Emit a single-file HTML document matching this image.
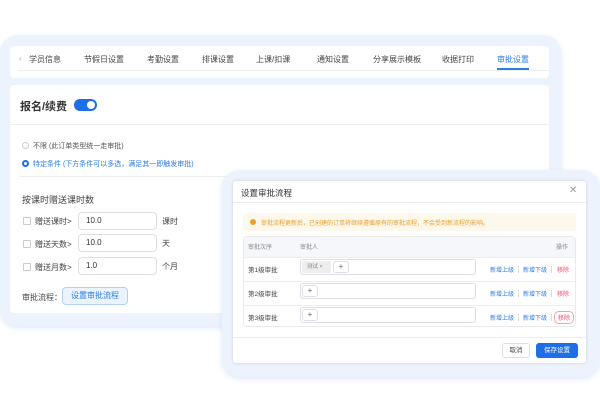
<!DOCTYPE html>
<html><head><meta charset="utf-8"><style>
*{box-sizing:border-box;margin:0;padding:0}
body{width:600px;height:410px;background:#fff;font-family:"Liberation Sans","Noto Sans CJK SC",sans-serif;position:relative;overflow:hidden;color:#333}
.abs{position:absolute}
.frame{background:#edf3fd;border-radius:18px;box-shadow:0 2px 6px rgba(160,190,240,.35)}
.card{background:#fff;border-radius:4px}
.t{font-size:8px;color:#444;white-space:nowrap;position:absolute}
.inp{position:absolute;border:1px solid #dcdfe6;border-radius:4px;background:#fff;font-size:8px;padding-left:7px;line-height:16px;color:#333}
.cb{position:absolute;width:8px;height:8px;border:1px solid #ccc;border-radius:1px;background:#fff}
.link{position:absolute;font-size:6px;color:#2b7de9;white-space:nowrap}
.rm{position:absolute;font-size:6px;color:#f0506e;white-space:nowrap}
.sep{position:absolute;width:1px;height:7px;background:#ddd}
.plus{position:absolute;width:16px;height:12px;border:1px solid #dcdfe6;border-radius:3px;font-size:8px;line-height:10px;text-align:center;color:#666;background:#fff}
</style></head><body>
<div class="abs frame" style="left:0;top:35px;width:561px;height:291px"></div>
<div class="abs card" style="left:10px;top:46px;width:539px;height:32px"></div>
<div class="abs" style="left:18px;top:70px;width:531px;height:1px;background:#eee"></div>
<div class="t" style="left:19px;top:54px;color:#aaa">‹</div>
<div class="t" style="left:29px;top:54px">学员信息</div>
<div class="t" style="left:84px;top:54px">节假日设置</div>
<div class="t" style="left:147px;top:54px">考勤设置</div>
<div class="t" style="left:202px;top:54px">排课设置</div>
<div class="t" style="left:256px;top:54px">上课/扣课</div>
<div class="t" style="left:317px;top:54px">通知设置</div>
<div class="t" style="left:373px;top:54px">分享展示模板</div>
<div class="t" style="left:442px;top:54px">收据打印</div>
<div class="t" style="left:497px;top:54px;color:#2b7de9">审批设置</div>
<div class="abs" style="left:497px;top:68px;width:32px;height:2px;background:#2b7de9"></div>

<div class="abs card" style="left:10px;top:85px;width:539px;height:228px"></div>
<div class="t" style="left:20px;top:98px;font-size:11px;font-weight:bold;color:#333">报名/续费</div>
<div class="abs" style="left:74px;top:99px;width:23px;height:12px;border-radius:6px;background:#1d6ee8"><div class="abs" style="right:2px;top:2px;width:8px;height:8px;border-radius:50%;background:#fff"></div></div>
<div class="abs" style="left:10px;top:124px;width:539px;height:1px;background:#eee"></div>
<div class="abs" style="left:22px;top:142px;width:7px;height:7px;border:1px solid #ccc;border-radius:50%"></div>
<div class="t" style="left:33px;top:141px;font-size:7px;color:#555">不限 (此订单类型统一走审批)</div>
<div class="abs" style="left:22px;top:160px;width:7px;height:7px;border:2px solid #1d6ee8;border-radius:50%"></div>
<div class="t" style="left:33px;top:159px;font-size:7px;color:#2b7de9">特定条件 (下方条件可以多选，满足其一即触发审批)</div>
<div class="abs" style="left:20px;top:176px;width:529px;height:1px;background:#eee"></div>
<div class="t" style="left:22px;top:193px;font-size:9px">按课时赠送课时数</div>
<div class="cb" style="left:23px;top:217px"></div><div class="t" style="left:35px;top:216px">赠送课时&gt;</div>
<div class="inp" style="left:78px;top:212px;width:79px;height:18px">10.0</div><div class="t" style="left:162px;top:216px">课时</div>
<div class="cb" style="left:23px;top:240px"></div><div class="t" style="left:35px;top:239px">赠送天数&gt;</div>
<div class="inp" style="left:78px;top:234px;width:79px;height:18px">10.0</div><div class="t" style="left:162px;top:238px">天</div>
<div class="cb" style="left:23px;top:263px"></div><div class="t" style="left:35px;top:262px">赠送月数&gt;</div>
<div class="inp" style="left:78px;top:257px;width:79px;height:18px">1.0</div><div class="t" style="left:162px;top:261px">个月</div>
<div class="t" style="left:22px;top:292px">审批流程：</div>
<div class="abs" style="left:62px;top:287px;width:66px;height:18px;border:1px solid #b3d1f8;background:#eaf3fe;border-radius:4px;font-size:8px;color:#2b7de9;text-align:center;line-height:16px">设置审批流程</div>

<div class="abs frame" style="left:222px;top:170px;width:378px;height:207px"></div>
<div class="abs" style="left:233px;top:181px;width:353px;height:182px;background:#fff;border-radius:3px;box-shadow:0 0 3px rgba(0,0,0,.15)"></div>
<div class="t" style="left:241px;top:187px;font-size:8.5px;color:#333">设置审批流程</div>
<div class="t" style="left:569px;top:185px;font-size:10px;color:#999">✕</div>
<div class="abs" style="left:233px;top:202px;width:353px;height:1px;background:#eee"></div>
<div class="abs" style="left:243px;top:213px;width:333px;height:18px;background:#fdf8ec;border-radius:3px"></div>
<div class="abs" style="left:250px;top:219px;width:6px;height:6px;border-radius:50%;background:#f0a020"></div>
<div class="t" style="left:261px;top:218px;font-size:6px;color:#e8a030">审批流程更新后，已创建的订单将继续遵循原有的审批流程，不会受到新流程的影响。</div>
<div class="abs" style="left:243px;top:236px;width:333px;height:91px;border:1px solid #eaeaea;border-radius:4px;overflow:hidden">
<div style="height:20px;background:#f5f7fa"></div>
<div style="height:24px;border-top:1px solid #eee"></div>
<div style="height:24px;border-top:1px solid #eee"></div>
<div style="height:23px;border-top:1px solid #eee"></div></div>
<div class="t" style="left:248px;top:242px;font-size:6px;color:#888">审批次序</div>
<div class="t" style="left:300px;top:242px;font-size:6px;color:#888">审批人</div>
<div class="t" style="left:556px;top:242px;font-size:6px;color:#888">操作</div>

<div class="t" style="left:248px;top:264px;font-size:6.5px">第1级审批</div>
<div class="abs" style="left:300px;top:259px;width:176px;height:16px;border:1px solid #dcdfe6;border-radius:3px"></div>
<div class="abs" style="left:302px;top:261px;width:29px;height:12px;background:#eee;border-radius:2px;font-size:5.5px;color:#888;line-height:12px;padding-left:5px">测试 ×</div>
<div class="plus" style="left:333px;top:261px">+</div>
<div class="t" style="left:248px;top:288px;font-size:6.5px">第2级审批</div>
<div class="abs" style="left:300px;top:283px;width:176px;height:16px;border:1px solid #dcdfe6;border-radius:3px"></div>
<div class="plus" style="left:302px;top:285px">+</div>
<div class="t" style="left:248px;top:312px;font-size:6.5px">第3级审批</div>
<div class="abs" style="left:300px;top:307px;width:176px;height:16px;border:1px solid #dcdfe6;border-radius:3px"></div>
<div class="plus" style="left:302px;top:309px">+</div>

<div class="link" style="left:490px;top:265px">新增上级</div><div class="sep" style="left:518px;top:266px"></div>
<div class="link" style="left:523px;top:265px">新增下级</div><div class="sep" style="left:551px;top:266px"></div>
<div class="rm" style="left:557px;top:265px">移除</div>
<div class="link" style="left:490px;top:289px">新增上级</div><div class="sep" style="left:518px;top:290px"></div>
<div class="link" style="left:523px;top:289px">新增下级</div><div class="sep" style="left:551px;top:290px"></div>
<div class="rm" style="left:557px;top:289px">移除</div>
<div class="link" style="left:490px;top:313px">新增上级</div><div class="sep" style="left:518px;top:314px"></div>
<div class="link" style="left:523px;top:313px">新增下级</div><div class="sep" style="left:551px;top:314px"></div>
<div class="rm" style="left:554px;top:311px;border:1px solid #f6a0b0;border-radius:5px;padding:1px 3px">移除</div>

<div class="abs" style="left:233px;top:337px;width:353px;height:1px;background:#eee"></div>
<div class="abs" style="left:502px;top:343px;width:28px;height:15px;border:1px solid #dcdfe6;border-radius:3px;font-size:6.5px;text-align:center;line-height:13px;color:#444">取消</div>
<div class="abs" style="left:536px;top:343px;width:42px;height:15px;background:#1d6ee8;border-radius:3px;font-size:6.5px;text-align:center;line-height:15px;color:#fff">保存设置</div>
</body></html>
